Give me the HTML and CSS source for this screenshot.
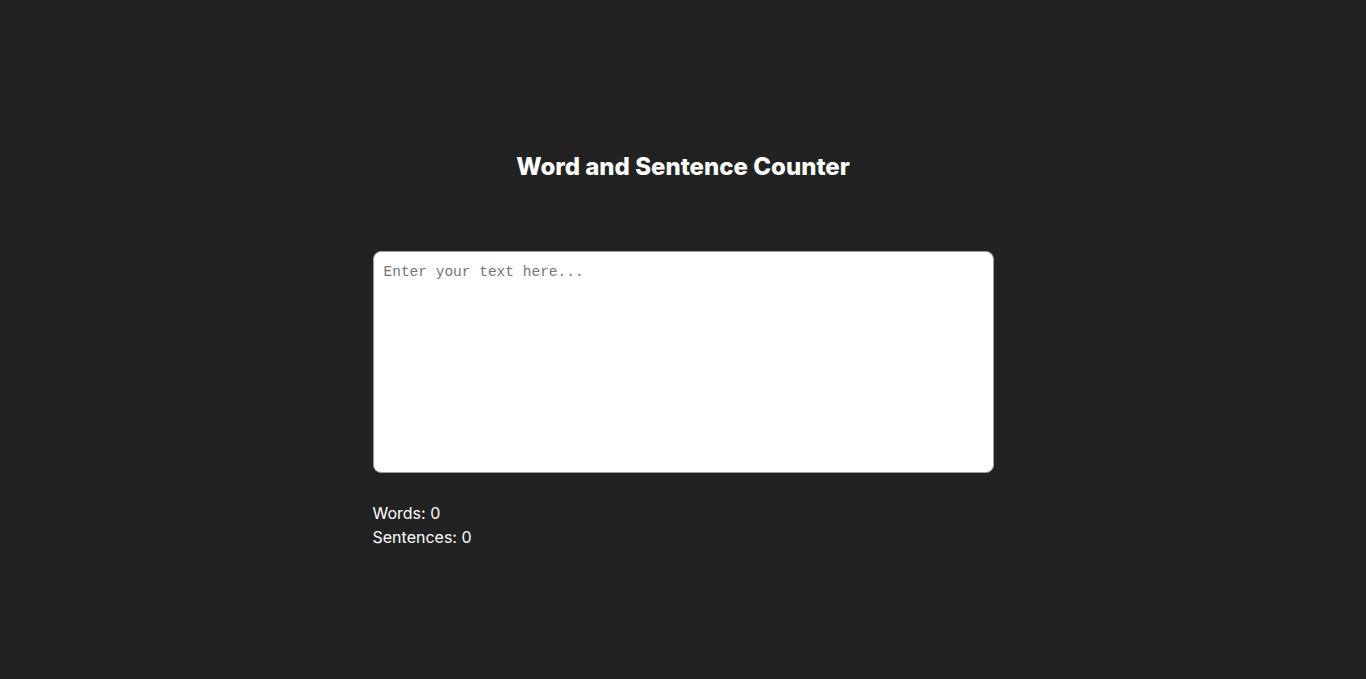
FILE: index.html
```html
<!DOCTYPE html>
<html lang="en">
<head>
<meta charset="utf-8">
<title>Word and Sentence Counter</title>
<link rel="stylesheet" href="styles.css">
</head>
<body>
<main class="app">
  <h1 class="title">Word and Sentence Counter</h1>
  <textarea class="input" placeholder="Enter your text here..."></textarea>
  <div class="stats">
    <p class="stat">Words: <span>0</span></p>
    <p class="stat">Sentences: <span>0</span></p>
  </div>
</main>
</body>
</html>
```

FILE: styles.css
```css
html, body {
  margin: 0;
  padding: 0;
  background: #222222;
  height: 100%;
}
body {
  font-family: Inter, "Noto Sans", sans-serif;
  color: #ffffff;
}
.app {
  width: 621px;
  margin: 0 auto;
  padding-top: 152px;
  display: flex;
  flex-direction: column;
}
.title {
  margin: 0;
  text-align: center;
  font-size: 24px;
  line-height: 30px;
  font-weight: 800;
}
.input {
  margin-top: 69px;
  box-sizing: border-box;
  width: 621px;
  height: 222px;
  border: 1px solid #9a9a9a;
  border-radius: 8px;
  background: #ffffff;
  padding: 10px 10px;
  font-family: "Liberation Mono", monospace;
  font-size: 14.5px;
  line-height: 20px;
  resize: none;
  outline: none;
}
.input::placeholder {
  color: #757575;
}
.stats {
  margin-top: 28px;
}
.stat {
  margin: 0;
  font-size: 16px;
  line-height: 24px;
}
```
